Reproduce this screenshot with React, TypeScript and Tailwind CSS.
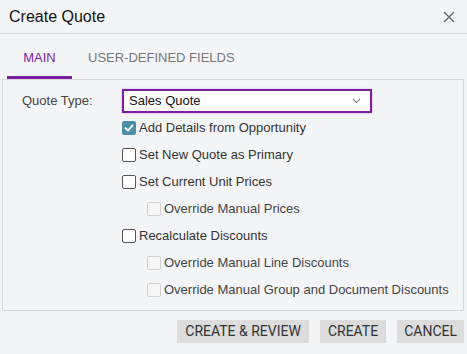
import React from "react";

function Check({ checked, disabled }: { checked?: boolean; disabled?: boolean }) {
  if (checked) {
    return (
      <span className="flex h-[14px] w-[14px] items-center justify-center rounded-[2px] bg-[#4a8fa6]">
        <svg width="10" height="10" viewBox="0 0 10 10">
          <path d="M1.5 5.2 L4 7.6 L8.6 2.4" fill="none" stroke="white" strokeWidth="1.8" strokeLinecap="round" strokeLinejoin="round" />
        </svg>
      </span>
    );
  }
  return (
    <span
      className={
        disabled
          ? "block h-[14px] w-[14px] rounded-[2px] border border-[#d2d2d2] bg-[#f7f7f7]"
          : "block h-[14px] w-[14px] rounded-[2px] border border-[#555] bg-white"
      }
    />
  );
}

function Row({ label, checked, disabled, indent }: { label: string; checked?: boolean; disabled?: boolean; indent?: boolean }) {
  return (
    <div className={"flex h-[27px] items-center gap-[3px] " + (indent ? "pl-[25px]" : "")}>
      <Check checked={checked} disabled={disabled} />
      <span className={"text-[13px] " + (disabled ? "text-[#444]" : "text-[#333]")}>{label}</span>
    </div>
  );
}

export default function App() {
  return (
    <div className="h-[354px] w-[467px] bg-[#f4f5f7] font-['Liberation_Sans',Arial,sans-serif] text-[#222] overflow-hidden">
      <div className="flex h-[34px] items-center justify-between border-b border-[#d6d8db] pl-[9px] pr-[12px]">
        <span className="text-[16px] text-[#111]">Create Quote</span>
        <svg width="12" height="12" viewBox="0 0 12 12">
          <path d="M1 1 L11 11 M11 1 L1 11" stroke="#666" strokeWidth="1.3" />
        </svg>
      </div>
      <div className="flex h-[45px] items-end pl-[7px]">
        <div className="flex h-full w-[65px] flex-col items-center justify-end">
          <span className="mb-[9px] text-[13px] text-[#7b1fa2]">MAIN</span>
          <div className="h-[3px] w-full bg-[#7b1fa2]" />
        </div>
        <div className="flex h-full flex-col justify-end pl-[16px]">
          <span className="mb-[12px] text-[13px] text-[#777]">USER-DEFINED FIELDS</span>
        </div>
      </div>
      <div className="ml-[2px] mr-[3px] h-[232px] border border-[#d6d6d6] pt-[9px]">
        <div className="flex items-center">
          <span className="w-[119px] pl-[19px] text-[13px] text-[#444]">Quote Type:</span>
          <div className="flex h-[24px] w-[250px] items-center justify-between border-2 border-[#7b1fa2] bg-white pl-[5px] pr-[9px] shadow-[0_0_2px_#d9a8f0]">
            <span className="text-[13px] text-[#111]">Sales Quote</span>
            <svg width="9" height="6" viewBox="0 0 9 6">
              <path d="M1 1 L4.5 4.5 L8 1" fill="none" stroke="#888" strokeWidth="1.1" />
            </svg>
          </div>
        </div>
        <div className="mt-[1px] pl-[119px]">
          <Row label="Add Details from Opportunity" checked />
          <Row label="Set New Quote as Primary" />
          <Row label="Set Current Unit Prices" />
          <Row label="Override Manual Prices" disabled indent />
          <Row label="Recalculate Discounts" />
          <Row label="Override Manual Line Discounts" disabled indent />
          <Row label="Override Manual Group and Document Discounts" disabled indent />
        </div>
      </div>
      <div className="flex justify-end gap-[11px] pr-[3px] pt-[9px] font-['Roboto',sans-serif]">
        <button className="h-[23px] bg-[#dcdcdc] px-[8px] text-[14px] text-[#333]">CREATE &amp; REVIEW</button>
        <button className="h-[23px] bg-[#dcdcdc] px-[8px] text-[14px] text-[#333]">CREATE</button>
        <button className="h-[23px] bg-[#dcdcdc] px-[7px] text-[14px] text-[#333]">CANCEL</button>
      </div>
    </div>
  );
}
